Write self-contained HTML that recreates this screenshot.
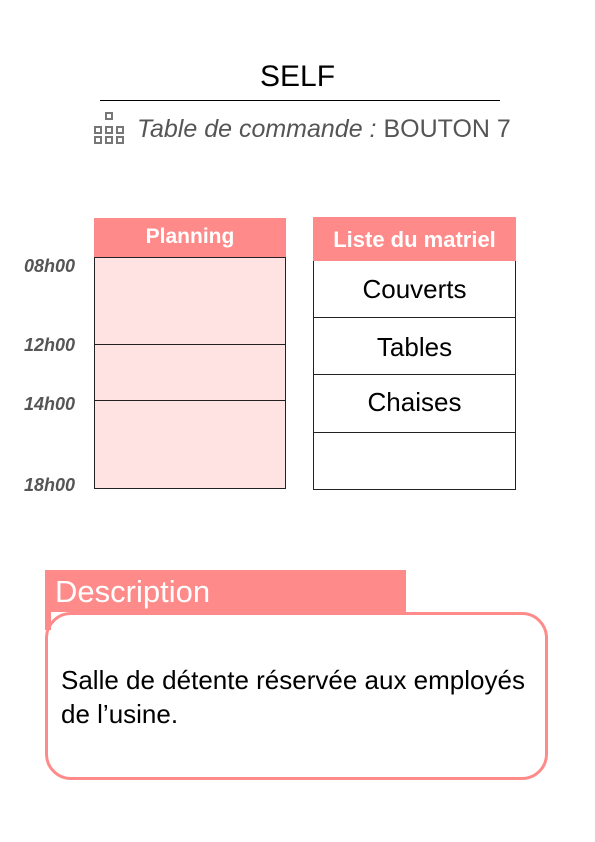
<html><head><style>
body{margin:0;width:595px;height:842px;background:#fff;position:relative;font-family:"Liberation Sans",sans-serif;overflow:hidden}
.a{position:absolute;white-space:nowrap}
.sq{position:absolute;width:8px;height:8px;border:2px solid #777;box-sizing:border-box}
.t{font-style:italic;font-weight:bold;font-size:18px;color:#555;left:24px}
</style></head><body>
<div class="a" style="left:0;width:595px;top:60px;text-align:center;font-size:30px">SELF</div>
<div class="a" style="left:100px;top:100px;width:400px;height:1px;background:#000"></div>
<div class="sq" style="left:105px;top:112px"></div>
<div class="sq" style="left:94px;top:126px"></div><div class="sq" style="left:105px;top:126px"></div><div class="sq" style="left:116px;top:126px"></div>
<div class="sq" style="left:94px;top:136px"></div><div class="sq" style="left:105px;top:136px"></div><div class="sq" style="left:116px;top:136px"></div>
<div class="a" style="left:137px;top:115px;font-size:25px;color:#555"><i>Table de commande :</i> BOUTON 7</div>

<div class="a" style="left:94px;top:218px;width:192px;height:39px;background:#ff8a8a;color:#fff;font-size:21px;font-weight:bold;text-align:center;line-height:38px">Planning</div>
<div class="a" style="left:94px;top:257px;width:190px;height:230px;background:#ffe2e2;border:1px solid #222"></div>
<div class="a" style="left:94px;top:344px;width:192px;height:1px;background:#222"></div>
<div class="a" style="left:94px;top:400px;width:192px;height:1px;background:#222"></div>
<div class="a t" style="top:256px">08h00</div>
<div class="a t" style="top:335px">12h00</div>
<div class="a t" style="top:394px">14h00</div>
<div class="a t" style="top:475px">18h00</div>

<div class="a" style="left:313px;top:217px;width:203px;height:44px;background:#ff8a8a;color:#fff;font-size:22px;font-weight:bold;text-align:center;line-height:46px">Liste du matriel</div>
<div class="a" style="left:313px;top:261px;width:201px;height:228px;border:1px solid #222;border-top:none"></div>
<div class="a" style="left:313px;top:317px;width:203px;height:1px;background:#222"></div>
<div class="a" style="left:313px;top:374px;width:203px;height:1px;background:#222"></div>
<div class="a" style="left:313px;top:432px;width:203px;height:1px;background:#222"></div>
<div class="a" style="left:313px;top:274px;width:203px;text-align:center;font-size:26px">Couverts</div>
<div class="a" style="left:313px;top:332px;width:203px;text-align:center;font-size:26px">Tables</div>
<div class="a" style="left:313px;top:387px;width:203px;text-align:center;font-size:26px">Chaises</div>

<div class="a" style="left:45px;top:570px;width:361px;height:42px;background:#ff8a8a;color:#fff;font-size:31px;line-height:44px;padding-left:10px;box-sizing:border-box">Description</div>
<div class="a" style="left:45px;top:570px;width:6px;height:60px;background:#ff8a8a"></div>
<div class="a" style="left:45px;top:612px;width:503px;height:168px;border:3px solid #ff8a8a;border-radius:26px;box-sizing:border-box;background:transparent"></div>
<div class="a" style="left:61px;top:663px;font-size:26px;line-height:34px;width:480px">Salle de détente réservée aux employés<br>de l’usine.</div>
</body></html>
